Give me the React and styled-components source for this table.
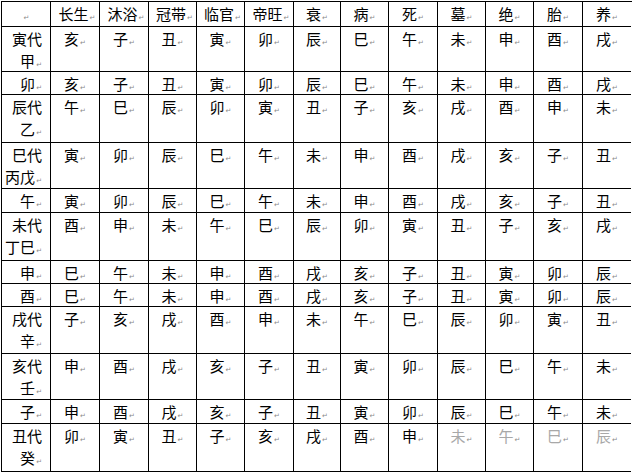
import React from 'react';
import styled, { createGlobalStyle } from 'styled-components';

const GlobalStyle = createGlobalStyle`
  html, body {
    margin: 0;
    padding: 0;
    background: #fff;
  }
  body {
    font-family: "Noto Sans CJK SC", "Noto Sans CJK JP", sans-serif;
  }
`;

const Page = styled.div`
  padding: 1px 0 0 1px;
  width: 632px;
  height: 474px;
  box-sizing: border-box;
  overflow: hidden;
`;

const Table = styled.div`
  display: grid;
  grid-template-columns: 49px 49px 49px 48px 48px 49px 47px 48px 49px 48px 48px 49px 48px 3px;
  grid-template-rows: 25px 45px 23px 48px 46px 24px 48px 23px 23px 47px 46px 24px 48px;
  border-top: 1px solid #000;
  border-left: 1px solid #000;
  width: max-content;
`;

const Cell = styled.div`
  box-sizing: border-box;
  border-right: ${p => (p.$last ? 'none' : '1px solid #000')};
  border-bottom: 1px solid #000;
  padding: 1px ${p => (p.$head ? '8px' : '0')} 0 ${p => (p.$shift ? '4px' : '0')};
  font-size: 15px;
  line-height: 22px;
  color: ${p => (p.$faded ? '#a8a8a8' : '#000')};
  text-align: ${p => (p.$head ? 'right' : 'center')};
  white-space: nowrap;
`;

const Line = styled.div`
  height: 22px;
`;

const Mark = styled.span`
  font-family: "DejaVu Sans", sans-serif;
  font-size: 7px;
  color: #8a8a8a;
  margin-left: 1px;
`;

const EndMark = styled.div`
  &::before {
    content: '';
    display: block;
    margin: 12px 0 0 1px;
    width: 2px;
    height: 1px;
    background: #b8b8b8;
  }
`;

const header = ['', '长生', '沐浴', '冠带', '临官', '帝旺', '衰', '病', '死', '墓', '绝', '胎', '养'];

const rows = [
  { head: ['寅代', '甲'], cells: '亥子丑寅卯辰巳午未申酉戌' },
  { head: ['卯'], cells: '亥子丑寅卯辰巳午未申酉戌' },
  { head: ['辰代', '乙'], cells: '午巳辰卯寅丑子亥戌酉申未' },
  { head: ['巳代', '丙戊'], cells: '寅卯辰巳午未申酉戌亥子丑' },
  { head: ['午'], cells: '寅卯辰巳午未申酉戌亥子丑' },
  { head: ['未代', '丁巳'], cells: '酉申未午巳辰卯寅丑子亥戌' },
  { head: ['申'], cells: '巳午未申酉戌亥子丑寅卯辰' },
  { head: ['酉'], cells: '巳午未申酉戌亥子丑寅卯辰' },
  { head: ['戌代', '辛'], cells: '子亥戌酉申未午巳辰卯寅丑' },
  { head: ['亥代', '壬'], cells: '申酉戌亥子丑寅卯辰巳午未' },
  { head: ['子'], cells: '申酉戌亥子丑寅卯辰巳午未' },
  { head: ['丑代', '癸'], cells: '卯寅丑子亥戌酉申未午巳辰', faded: [9, 10, 11, 12] },
];

const Text = ({ children }) => (
  <>
    {children}
    <Mark>↵</Mark>
  </>
);

const HeadCell = ({ lines }) => (
  <Cell $head>
    {lines.length === 1 ? (
      <Text>{lines[0]}</Text>
    ) : (
      <>
        <Line>{lines[0]}</Line>
        <Line>
          <Text>{lines[1]}</Text>
        </Line>
      </>
    )}
  </Cell>
);

export default function App() {
  return (
    <Page>
      <GlobalStyle />
      <Table>
        {header.map((h, i) => (
          <Cell key={`h${i}`} $last={i === 12} $shift={h.length === 2}>
            <Text>{h}</Text>
          </Cell>
        ))}
        <EndMark />
        {rows.map((r, ri) => (
          <React.Fragment key={ri}>
            <HeadCell lines={r.head} />
            {r.cells.split('').map((c, ci) => (
              <Cell key={ci} $last={ci === 11} $faded={r.faded && r.faded.includes(ci + 1)}>
                <Text>{c}</Text>
              </Cell>
            ))}
            <EndMark />
          </React.Fragment>
        ))}
      </Table>
    </Page>
  );
}
